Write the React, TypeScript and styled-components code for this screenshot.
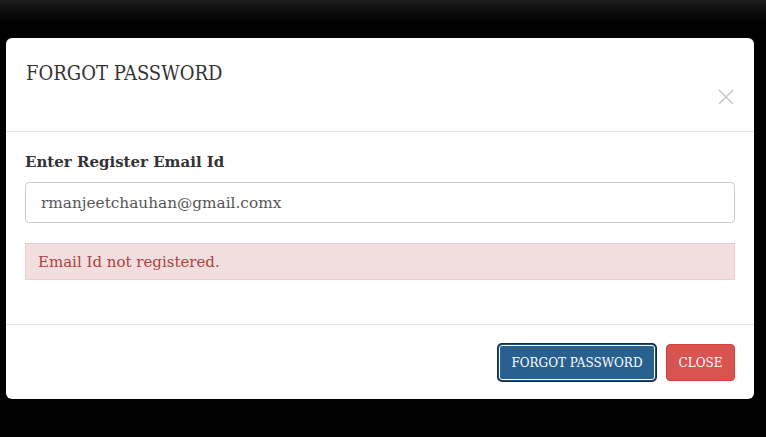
import React from "react";
import styled, { createGlobalStyle } from "styled-components";

const Global = createGlobalStyle`
  html, body { margin: 0; padding: 0; background: #000; }
  body { font-family: "DejaVu Serif", "Liberation Serif", serif; }
  * { box-sizing: border-box; }
`;

const Backdrop = styled.div`
  width: 766px;
  height: 437px;
  background: linear-gradient(#1c1c1c 0px, #000 22px, #000 100%);
  padding: 38px 12px 0 6px;
`;

const Modal = styled.div`
  width: 748px;
  height: 361px;
  background: #fff;
  border-radius: 6px;
  display: flex;
  flex-direction: column;
`;

const Header = styled.div`
  height: 94px;
  border-bottom: 1px solid #e5e5e5;
  display: flex;
  justify-content: space-between;
  padding: 20px 20px 0 20px;
`;

const Title = styled.h4`
  margin: 0;
  font-family: "DejaVu Serif Condensed", "DejaVu Serif", serif;
  font-weight: normal;
  font-size: 20px;
  line-height: 30px;
  color: #333;
`;

const CloseX = styled.button`
  border: 0;
  background: none;
  padding: 0;
  margin-top: 31px;
  width: 16px;
  height: 16px;
  cursor: pointer;
`;

const Body = styled.div`
  flex: 1;
  padding: 20px 19px 0 19px;
  border-bottom: 1px solid #e5e5e5;
`;

const Label = styled.label`
  display: block;
  font-weight: bold;
  font-size: 15px;
  color: #333;
  line-height: 20px;
  margin-bottom: 10px;
`;

const Input = styled.input`
  display: block;
  width: 100%;
  height: 41px;
  border: 1px solid #ccc;
  border-radius: 4px;
  padding: 0 15px;
  font-family: "DejaVu Serif", serif;
  font-size: 15.3px;
  color: #555;
  outline: none;
`;

const Alert = styled.div`
  margin-top: 20px;
  height: 37px;
  background: #f2dede;
  border: 1px solid #ebccd1;
  color: #a94442;
  font-size: 15px;
  padding: 0 12px;
  display: flex;
  align-items: center;
`;

const Footer = styled.div`
  height: 74px;
  display: flex;
  justify-content: flex-end;
  align-items: flex-start;
  gap: 10px;
  padding: 19px 19px 0 0;
`;

const Btn = styled.button<{ $variant: "primary" | "danger" }>`
  height: 37px;
  border-radius: 4px;
  font-family: "DejaVu Serif", serif;
  font-size: 12px;
  color: #fff;
  padding: 0 ${(p) => (p.$variant === "primary" ? "12.5px" : "11.5px")};
  cursor: pointer;
  background: ${(p) => (p.$variant === "primary" ? "#286090" : "#d9534f")};
  border: 1px solid ${(p) => (p.$variant === "primary" ? "#204d74" : "#d43f3a")};
  ${(p) =>
    p.$variant === "primary"
      ? "box-shadow: 0 0 0 1px #fff inset, 0 0 0 1px #122b40; outline: none;"
      : ""}
`;

export default function App() {
  return (
    <>
      <Global />
      <Backdrop>
        <Modal>
          <Header>
            <Title>FORGOT PASSWORD</Title>
            <CloseX aria-label="close">
              <svg width="16" height="16" viewBox="0 0 16 16">
                <path d="M1 1 L15 15 M15 1 L1 15" stroke="#c8c8c8" strokeWidth="1.6" />
              </svg>
            </CloseX>
          </Header>
          <Body>
            <Label>Enter Register Email Id</Label>
            <Input defaultValue="rmanjeetchauhan@gmail.comx" />
            <Alert>Email Id not registered.</Alert>
          </Body>
          <Footer>
            <Btn $variant="primary">FORGOT PASSWORD</Btn>
            <Btn $variant="danger">CLOSE</Btn>
          </Footer>
        </Modal>
      </Backdrop>
    </>
  );
}
